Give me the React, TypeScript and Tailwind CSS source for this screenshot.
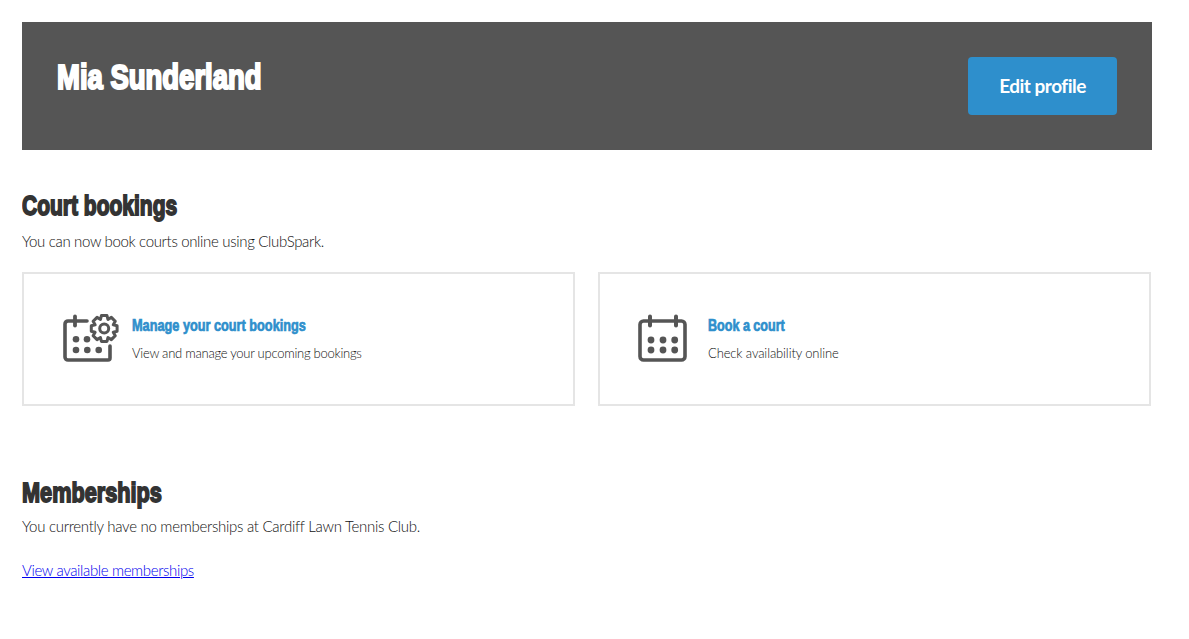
const heading = { fontFamily: '"Liberation Sans", Arial, sans-serif' };

function gearPath(cx: number, cy: number, ro: number, rv: number, teeth: number) {
  const pts: string[] = [];
  const step = (Math.PI * 2) / teeth;
  for (let i = 0; i < teeth; i++) {
    const a = i * step - Math.PI / 2;
    const offsets: [number, number][] = [
      [-0.5, rv],
      [-0.27, ro],
      [0.27, ro],
      [0.5, rv],
    ];
    for (const [o, r] of offsets) {
      const t = a + o * step;
      pts.push(`${(cx + r * Math.cos(t)).toFixed(2)} ${(cy + r * Math.sin(t)).toFixed(2)}`);
    }
  }
  return `M${pts.join("L")}Z`;
}

function GearCalendarIcon() {
  return (
    <svg width="58" height="48" viewBox="0 0 58 48" fill="none" className="shrink-0 overflow-visible">
      <path d="M24 6H5a3 3 0 0 0-3 3v33a3 3 0 0 0 3 3h40a2 2 0 0 0 2-2V31" stroke="#555" strokeWidth="3.6" strokeLinecap="round" />
      <path d="M12 1.500v9" stroke="#555" strokeWidth="3.8" strokeLinecap="round" />
      <g fill="#555">
        <circle cx="13" cy="24.300" r="3.300" /><circle cx="24" cy="24.300" r="3.300" />
        <circle cx="13" cy="35" r="3.300" /><circle cx="24.300" cy="35" r="3.300" /><circle cx="35.700" cy="35" r="3.300" />
      </g>
      <circle cx="41.200" cy="13.500" r="4.500" stroke="#555" strokeWidth="3" />
      <path d={gearPath(41.2, 13.5, 13.2, 9.8, 8)} stroke="#555" strokeWidth="3" strokeLinejoin="round" />
    </svg>
  );
}

function CalendarIcon() {
  return (
    <svg width="49" height="48" viewBox="0 0 49 48" fill="none" className="shrink-0 overflow-visible">
      <rect x="1" y="6" width="45" height="39" rx="3.500" stroke="#555" strokeWidth="3.600" />
      <path d="M11 1.500v9M37 1.500v9" stroke="#555" strokeWidth="4" strokeLinecap="round" />
      <g fill="#555">
        <circle cx="12" cy="25" r="3.400" /><circle cx="24" cy="25" r="3.400" /><circle cx="35.700" cy="25" r="3.400" />
        <circle cx="12" cy="35" r="3.400" /><circle cx="24" cy="35" r="3.400" /><circle cx="35.700" cy="35" r="3.400" />
      </g>
    </svg>
  );
}

function Card({ icon, title, text, gap, squeeze, track }: { icon: React.ReactNode; title: string; text: string; gap: string; squeeze: string; track: string }) {
  return (
    <div className="flex h-[134px] flex-1 items-center border-2 border-[#e5e5e5] pl-[39px]">
      <div className={`flex items-center ${gap}`}>
        {icon}
        <div className="pt-[1px]">
          <div className={`origin-left text-[16px] leading-[20px] font-bold text-[#2e8fcc] [-webkit-text-stroke:0.7px_#2e8fcc] ${squeeze}`} style={heading}>{title}</div>
          <div className={`mt-[8px] text-[13px] leading-[19px] font-light text-[#111] ${track}`}>{text}</div>
        </div>
      </div>
    </div>
  );
}

export default function App() {
  return (
    <div className="min-h-[639px] bg-white pt-[22px] pl-[22px] font-['Lato',sans-serif] text-[#111]">
      <div className="w-[1130px]">
        <div className="flex h-[128px] items-start justify-between bg-[#555555] px-[35px] pt-[35px]">
          <h1 className="origin-left scale-x-[0.785] text-[35px] leading-[40px] font-bold text-white [-webkit-text-stroke:2.2px_#fff]" style={heading}>Mia Sunderland</h1>
          <button className="h-[58px] w-[149px] rounded-[4px] bg-[#2e8fcc] text-[19px] font-bold tracking-[-0.5px] text-white">Edit profile</button>
        </div>
        <h2 className="mt-[40px] origin-left scale-x-[0.75] text-[28px] leading-[32px] font-bold text-[#333] [-webkit-text-stroke:1.8px_#333]" style={heading}>Court bookings</h2>
        <p className="mt-[9px] text-[15px] leading-[20px] font-light tracking-[-0.33px]">You can now book courts online using ClubSpark.</p>
        <div className="mt-[21px] flex w-[1129px] gap-[23px]">
          <Card icon={<GearCalendarIcon />} title="Manage your court bookings" text="View and manage your upcoming bookings" gap="gap-[11px]" squeeze="scale-x-[0.795]" track="tracking-[-0.25px]" />
          <Card icon={<CalendarIcon />} title="Book a court" text="Check availability online" gap="gap-[20px]" squeeze="scale-x-[0.785]" track="tracking-[-0.12px]" />
        </div>
        <h2 className="mt-[71px] origin-left scale-x-[0.775] text-[28px] leading-[32px] font-bold text-[#333] [-webkit-text-stroke:1.8px_#333]" style={heading}>Memberships</h2>
        <p className="mt-[7px] text-[15px] leading-[20px] font-light tracking-[-0.28px]">You currently have no memberships at Cardiff Lawn Tennis Club.</p>
        <a href="#" className="mt-[24px] block text-[15px] leading-[20px] font-light tracking-[-0.36px] text-[#0000ee] underline">View available memberships</a>
      </div>
    </div>
  );
}
